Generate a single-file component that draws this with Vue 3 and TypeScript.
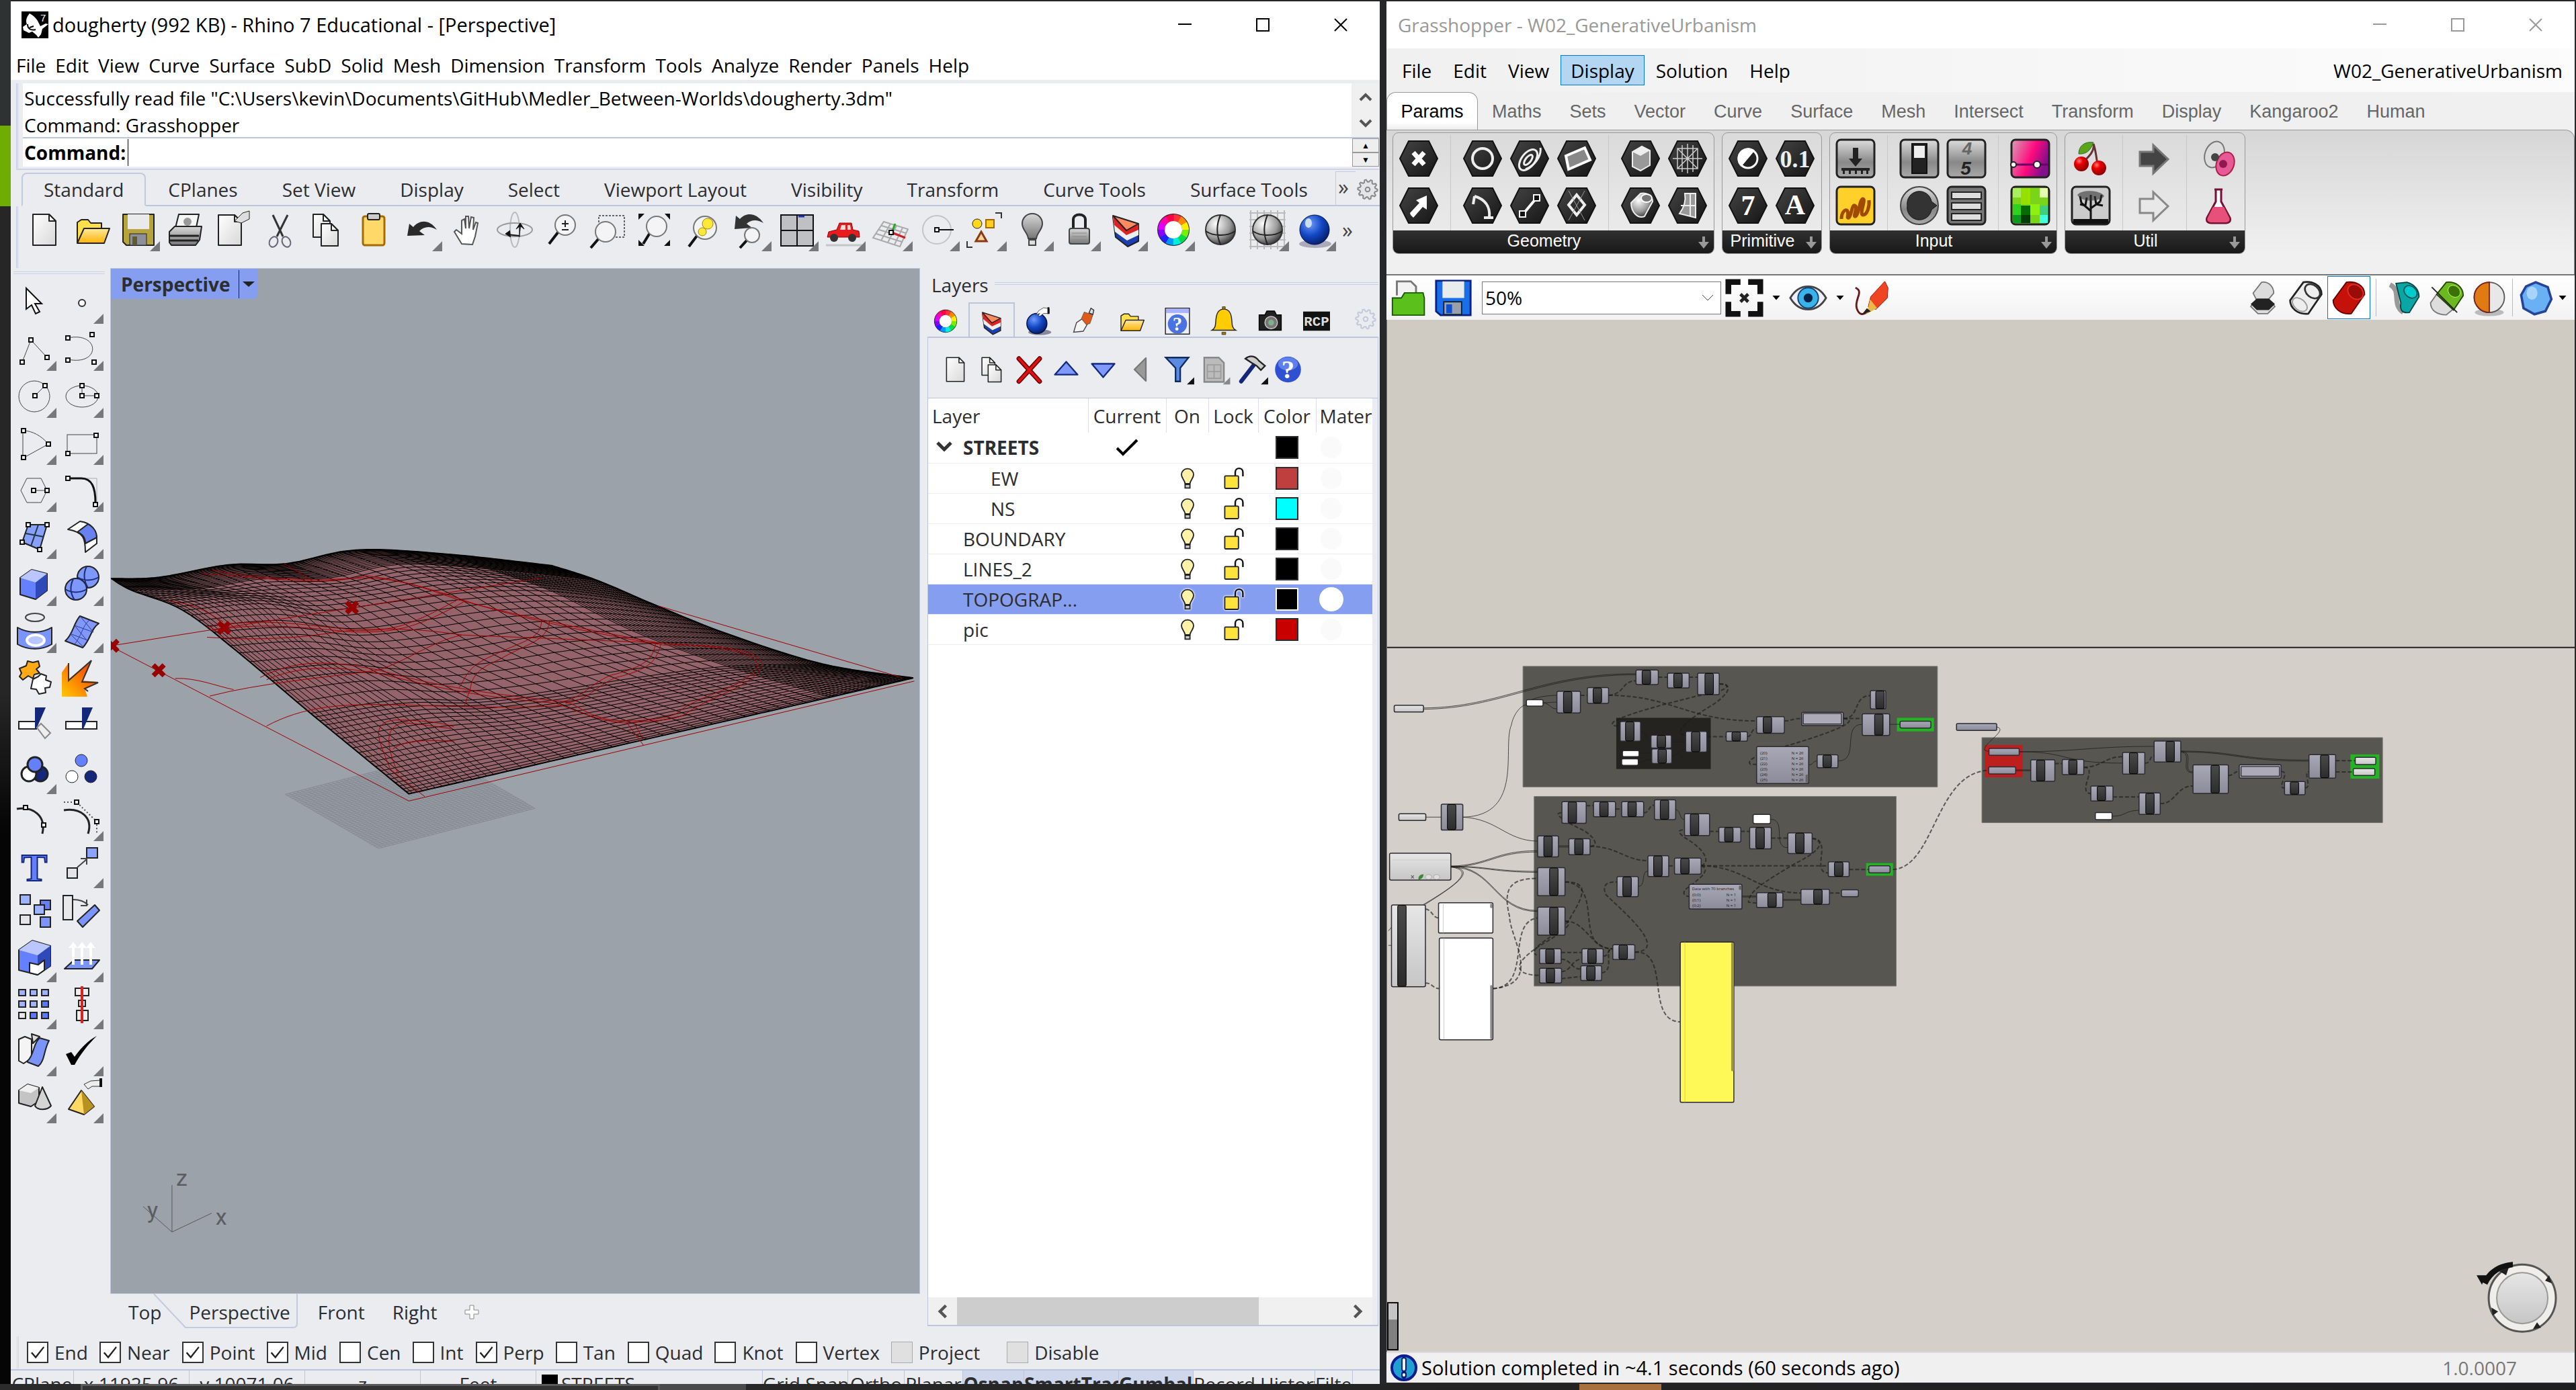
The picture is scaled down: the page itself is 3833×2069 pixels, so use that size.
<script setup lang="ts">
type Tool = { icon: string; more?: boolean; label: string }

const tri = 'stroke="#222" stroke-width="2" stroke-linejoin="round"'
const thin = 'fill="none" stroke="#444" stroke-width="1"'
const knob = (x: number, y: number): string =>
  `<rect x="${x - 3}" y="${y - 3}" width="6" height="6" fill="#fff" stroke="#111" stroke-width="2"/>`
const box = (x: number, y: number, w: number, h: number, fill: string, sw = 1): string =>
  `<rect x="${x}" y="${y}" width="${w}" height="${h}" fill="${fill}" stroke="#222" stroke-width="${sw}"/>`
const disc = (x: number, y: number, r: number, fill: string, sw = 1): string =>
  `<circle cx="${x}" cy="${y}" r="${r}" fill="${fill}" stroke="#222" stroke-width="${sw}"/>`
const lens = (x: number, y: number, r: number, hx: number, hy: number): string =>
  `<path d="M${x - r * 0.7} ${y + r * 0.7}L${hx} ${hy}" stroke="#111" stroke-width="4"/><circle cx="${x}" cy="${y}" r="${r}" fill="#f4f4f6" stroke="#777" stroke-width="2"/>`
const page = (x: number, y: number, w: number, h: number): string =>
  `<path d="M${x} ${y}h${w - 10}l10 10v${h - 10}h-${w}z" fill="url(#paper)" ${tri}/><path d="M${x + w - 10} ${y}v10h10z" fill="#fff" ${tri}/>`
const hue = ['#f33', '#f80', '#fe0', '#7e0', '#0d4', '#0ed', '#09f', '#22f', '#80f', '#d0f', '#f0a', '#f04']
const wheelArcs = hue
  .map((c, i) => {
    const a = ((i * 30 - 90) * Math.PI) / 180
    const b = (((i + 1) * 30 - 88) * Math.PI) / 180
    const p = (t: number) => `${(35 + 18 * Math.cos(t)).toFixed(1)} ${(35 + 18 * Math.sin(t)).toFixed(1)}`
    return `<path d="M${p(a)}A18 18 0 0 1 ${p(b)}" fill="none" stroke="${c}" stroke-width="10"/>`
  })
  .join('')
const gear = (c: string, dash = false): string => {
  let d = ''
  for (let i = 0; i < 40; i++) {
    const r = i % 4 < 2 ? 22 : 17
    const a = (i * 9 * Math.PI) / 180
    d += `${i ? 'L' : 'M'}${(35 + r * Math.cos(a)).toFixed(1)} ${(35 + r * Math.sin(a)).toFixed(1)}`
  }
  return `<path d="${d}z" fill="${dash ? 'none' : '#e4e5e8'}" stroke="${c}" stroke-width="3"/><circle cx="35" cy="35" r="5" fill="none" stroke="${c}" stroke-width="3"/>`
}
const layerWedge = `<path d="M15 16l4 30 18 14 16-8V27z" fill="#1c3fb0" ${tri}/><path d="M15 16l3 22 18 13 17-8V27z" fill="#eee"/><path d="M15 16l2 12 18 15 18-8V26z" fill="#d22"/><path d="M15 14l38 12-18 10z" fill="#ff8a60" ${tri}/>`
const hand = '<path d="M36 13l10-6 12 2v10H46l-8 6-3-2 3-4-8 3z" fill="#fff" stroke="#222" stroke-width="1"/><path d="M56 6v14" stroke="#111" stroke-width="4"/>'
const bulbPath = 'M35 11c-9 0-15 7-15 15 0 9 8 13 9 22h12c1-9 9-13 9-22 0-8-6-15-15-15z'

const icons: Record<string, string> = {
  page: page(18, 12, 34, 46),
  folder: `<path d="M14 55V24l6-4h10l4 5h16v10" fill="#ffe04a" ${tri}/><path d="M14 55l10-22h38L54 55z" fill="url(#gold)" ${tri}/>`,
  disk: `<path d="M12 12h46v46H17l-5-5z" fill="#b5a53c" ${tri}/><rect x="19" y="12" width="32" height="22" fill="#e8eaec"/><rect x="22" y="41" width="25" height="17" fill="#8d9098" stroke="#222"/><rect x="26" y="45" width="7" height="12" fill="#5f5a2c"/>`,
  printer: `<path d="M19 36l6-24h30l-5 24z" fill="#f6f6f6" ${tri}/><circle cx="38" cy="23" r="6" fill="#999"/><path d="M11 38l8-8h40l-3 20-6 8H14l-3-4z" fill="url(#steel)" ${tri}/><path d="M11 44h44M12 51h42" stroke="#222" stroke-width="3"/>`,
  props: `${page(14, 13, 34, 45)}<path d="M38 22l12-12 10-3v12l-12 6z" fill="#ddd" stroke="#222"/>`,
  cut: '<path d="M25 13l15 32M47 13L31 45" stroke="#333" stroke-width="3"/><ellipse cx="26" cy="53" rx="6" ry="8" fill="none" stroke="#667" stroke-width="2" transform="rotate(25 26 53)"/><ellipse cx="45" cy="53" rx="6" ry="8" fill="none" stroke="#667" stroke-width="2" transform="rotate(-25 45 53)"/>',
  copy: page(15, 12, 25, 34) + page(27, 26, 25, 33),
  paste: `<rect x="19" y="15" width="32" height="43" rx="3" fill="#ffd86a" stroke="#a36b00" stroke-width="3"/><rect x="26" y="11" width="18" height="9" rx="2" fill="#ccc" ${tri}/>`,
  undo: '<path d="M15 44L18 26l6 5c9-11 24-12 35 4-10-6-19-5-26 2l8 6z" fill="#2a2a2a"/>',
  pan: '<path d="M26 56L15 38l3-3 8 6V21l4-2 2 14V15h4l1 18 3-17 4 1-1 18 4-11 3 1-4 20-4 12z" fill="#fff" stroke="#555" stroke-width="2"/>',
  orbit: '<ellipse cx="35" cy="35" rx="7" ry="26" fill="none" stroke="#bbb" stroke-width="2"/><ellipse cx="35" cy="35" rx="26" ry="10" fill="none" stroke="#999" stroke-width="2"/><path d="M42 46V30l-5 4 6-9 6 9-5-4M28 36l-7 5 8 5" fill="#111" stroke="#111"/><path d="M24 42l18 2" stroke="#111" stroke-width="2"/>',
  zoom: lens(40, 28, 15, 16, 56) + '<path d="M35 26h10M40 21v10M35 35h10" stroke="#222" stroke-width="2"/>',
  zoomWin: '<rect x="20" y="14" width="38" height="32" fill="none" stroke="#666" stroke-width="2" stroke-dasharray="3 2"/>' + lens(30, 38, 15, 8, 62),
  zoomExt: lens(36, 30, 15, 16, 56) + '<path d="M9 20v-9h9zM56 11v9l-8-9zM9 50v9h9zM56 50v9h-9z" fill="#111"/>',
  zoomSel: lens(38, 32, 17, 14, 60) + '<circle cx="42" cy="26" r="8" fill="#ffe838" stroke="#a80"/><circle cx="34" cy="38" r="6" fill="#ffe838" stroke="#a80"/>',
  undoView: '<path d="M12 34L14 14l6 5c9-10 24-10 35 6-10-6-18-5-25 1l8 6z" fill="#333"/>' + lens(38, 43, 11, 20, 62),
  views: '<rect x="11" y="13" width="48" height="46" fill="#bfc0c4" stroke="#111" stroke-width="2"/><path d="M35 13v46M11 36h48" stroke="#111" stroke-width="2"/><path d="M37 15h9" stroke="#23a" stroke-width="3"/>',
  car: '<path d="M10 46l2-8 12-3 4-10h18l2 10 9 2 1 9z" fill="#e81c1c" stroke="#900"/><path d="M31 28h6v7h-8zM40 28h4l1 7h-5z" fill="#fcdada"/><circle cx="20" cy="47" r="6" fill="#333"/><circle cx="47" cy="47" r="6" fill="#333"/><path d="M8 58h54" stroke="#c5c6ca" stroke-width="3"/>',
  plane: '<g fill="none" stroke="#aaa" stroke-width="2"><path d="M24 23l36 11-12 26-40-13zM34 26l-14 25M43 29L30 54M52 32L40 57M21 29l36 11M17 35l37 11M13 41l38 12"/></g><path d="M36 39l5-13" stroke="#2a2" stroke-width="3"/><path d="M36 39l20 8" stroke="#c22" stroke-width="3"/>' + knob(35, 39),
  snap: '<circle cx="33" cy="35" r="21" fill="none" stroke="#c4c4c8" stroke-width="2"/><path d="M35 35h23" stroke="#111" stroke-width="2"/>' + knob(33, 35),
  shapes: `${disc(23, 26, 7, '#ffd81a')}<rect x="36" y="20" width="12" height="12" fill="#ffcf20" stroke="#a60" stroke-width="2"/><path d="M29 38l8 14H21z" fill="#ffd0a0" stroke="#8a3a10" stroke-width="3"/><path d="M50 10h9v8M8 52v9h8" fill="none" stroke="#333" stroke-width="2"/>`,
  bulbGrey: `<path d="${bulbPath}" fill="url(#steel)" stroke="#444" stroke-width="2"/><path d="M30 50h10v8H30z" fill="#ddd" stroke="#444" stroke-width="2"/>`,
  lock: '<path d="M26 34V20c0-10 18-10 18 0v14" fill="none" stroke="#222" stroke-width="4"/><rect x="20" y="33" width="30" height="23" rx="3" fill="url(#steel)" stroke="#444" stroke-width="2"/><path d="M24 40h22M24 45h22M24 50h22" stroke="#888"/>',
  layers: layerWedge,
  wheel: `<circle cx="35" cy="35" r="24" fill="#222"/>${wheelArcs}<circle cx="35" cy="35" r="13" fill="#fff"/>`,
  sphere: '<circle cx="35" cy="35" r="22" fill="url(#chrome)" stroke="#333" stroke-width="2"/><path d="M35 13c-6 14-6 30 0 44M13 37c12 8 32 8 44 0" fill="none" stroke="#222" stroke-width="2"/>',
  sphereGrid: '<path d="M8 10h54M8 20h54M8 30h54M8 40h54M8 50h54M8 60h54M10 6v58M20 6v58M30 6v58M40 6v58M50 6v58M60 6v58" stroke="#bbb" stroke-width="2"/><circle cx="35" cy="35" r="22" fill="url(#chrome)" stroke="#333" stroke-width="2"/><path d="M35 13c-6 14-6 30 0 44M13 37c12 8 32 8 44 0" fill="none" stroke="#222" stroke-width="2"/>',
  ball: '<ellipse cx="36" cy="56" rx="24" ry="6" fill="#aab"/><circle cx="35" cy="35" r="22" fill="url(#blueBall)" stroke="#014" stroke-width="1"/><ellipse cx="26" cy="25" rx="5" ry="7" fill="#cde"/>',
  gear: gear('#888'),
  gearPale: gear('#c3c9da', true),

  cursor: '<path d="M22 14v31l8-6 6 13 6-3-7-12h10z" fill="#fff" stroke="#111" stroke-width="2"/>',
  point: '<circle cx="35" cy="36" r="5" fill="#fff" stroke="#333" stroke-width="2"/>',
  polyline: `<path d="M16 54L29 21l24 26" ${thin}/>${knob(16, 54)}${knob(29, 21)}${knob(53, 47)}`,
  curve: `<path d="M14 18C62 8 64 60 14 50" ${thin}/>${knob(14, 18)}${knob(50, 13)}${knob(14, 51)}${knob(53, 54)}`,
  circle: `<circle cx="34" cy="35" r="23" ${thin}/><path d="M35 34l15-15" ${thin}/>${knob(50, 19)}${knob(35, 34)}`,
  ellipse: `<ellipse cx="35" cy="35" rx="24" ry="16" ${thin}/><path d="M35 19v15h22" ${thin}/>${knob(35, 19)}${knob(35, 34)}${knob(57, 34)}`,
  arc: `<path d="M17 57V16c14 0 28 8 38 20z" ${thin}/>${knob(18, 16)}${knob(18, 56)}${knob(55, 36)}`,
  rect: `<rect x="13" y="22" width="44" height="28" ${thin}/>${knob(56, 23)}${knob(14, 50)}`,
  hexagon: `<path d="M14 35l9-18h21l9 18-9 18H23z" ${thin}/><path d="M33 35h20" ${thin}/>${knob(33, 35)}${knob(53, 35)}`,
  fillet: `<path d="M36 17h21v38" fill="none" stroke="#aaa"/><path d="M14 17h20c16 0 21 14 21 36" fill="none" stroke="#111" stroke-width="3"/>${knob(14, 17)}${knob(55, 56)}`,
  patch: `<path d="M25 16h28L42 53 16 42z" fill="#86a0fb" ${tri}/><path d="M40 16L29 48M21 29l27 5" stroke="#234" stroke-width="2"/>${knob(25, 16)}${knob(53, 16)}${knob(16, 42)}${knob(42, 53)}`,
  bendSrf: `<path d="M14 23l18-12c16 2 26 12 25 33L40 57c0-20-2-30-26-34z" fill="#fff" ${tri}/><path d="M28 27l16-12c10 6 13 12 13 20L40 44c0-8-4-14-12-17z" fill="#6782f0" ${tri}/>`,
  cube: `<path d="M13 25l17-12 23 6v25L36 57l-23-7z" fill="#6580ff" ${tri}/><path d="M13 25l17-12 23 6-17 13z" fill="#b9c6ff"/><path d="M36 32l17-13v25L36 57z" fill="#2f49b8"/>`,
  spheres: `${disc(44, 24, 16, '#7d97fb', 2)}${disc(26, 42, 16, '#7d97fb', 2)}<path d="M42 8c-6 12-4 22 2 32M28 24c10 6 22 6 32 0M22 27c-6 12-4 22 2 31M10 42c10 6 22 6 32 0" fill="none" stroke="#1b2c7a" stroke-width="2"/>`,
  pipe: `<ellipse cx="35" cy="14" rx="14" ry="6" fill="none" stroke="#444" stroke-width="2"/><path d="M9 29c16 9 36 9 51 0v25c-15 9-35 9-51 0z" fill="#7b94fb" ${tri}/><ellipse cx="36" cy="48" rx="13" ry="8" fill="#b9c6ff" stroke="#fff" stroke-width="4"/>`,
  mesh: `<path d="M32 12l28 11c-12 8-12 24-24 36L10 49c12-10 12-26 22-37z" fill="#8198fa" ${tri}/><path d="M46 18c-10 8-12 24-22 36M24 26l28 10M17 38l26 10M32 12l20 24M24 26l18 22M17 38l20 20" stroke="#2a3f90" fill="none" stroke-width="1"/>`,
  puzzle: `<path d="M12 20l10-4 2-7 8 2 8-2 2 8-5 4 5 6-8 2-2 6-7-4-8 6-5-5 3-5z" fill="#ffa915" ${tri}/><path d="M32 36l8-4 4-4 8 3-1 6 8 3-2 8-7 1 1 7-10 2-4-7-8-1z" fill="#fff" ${tri}/>`,
  burst: '<path d="M5 62V26l10-14v24l34-28-14 30 24 2-20 10 4 12z" fill="url(#flame)"/><path d="M15 12v26L49 8 35 40l24 1-20 9 5 4" fill="none" stroke="#333" stroke-width="2"/>',
  trim: `${box(11, 29, 26, 11, '#fff', 2)}<path d="M35 8h16L37 40h-2z" fill="#14277a"/><path d="M38 38l6-6 14 14-8 8z" fill="#eee" stroke="#888" stroke-width="2"/>`,
  split: `${box(11, 29, 46, 11, '#fff', 2)}<path d="M35 8h16L37 40h-2z" fill="#14277a"/>`,
  group: `${disc(43, 37, 11, '#14277a', 3)}${disc(26, 37, 11, '#fff', 3)}${disc(35, 23, 11, '#6580ff', 3)}`,
  ungroup: `${disc(34, 17, 9, '#6580ff')}${disc(20, 41, 9, '#fff')}${disc(48, 41, 9, '#14277a')}`,
  editPts: `<path d="M8 19c24-4 44 10 38 37" fill="none" stroke="#222" stroke-width="3"/>${knob(21, 17)}${knob(48, 43)}`,
  ctrlPts: `<path d="M8 21c24-4 44 10 36 35" fill="none" stroke="#222" stroke-width="3"/><path d="M8 9h19l30 29v18" fill="none" stroke="#555" stroke-dasharray="2 3" stroke-width="2"/>${knob(27, 9)}${knob(57, 38)}`,
  text: '<text x="34" y="56" text-anchor="middle" font-family="Liberation Serif, serif" font-weight="bold" font-size="58" fill="#6580ff" stroke="#14277a" stroke-width="2">T</text>',
  move: `${box(42, 7, 16, 15, '#8ba3fc', 2)}${box(13, 37, 15, 15, '#e4e4e8', 2)}<path d="M28 36l14-12m-9-1h9v9" fill="none" stroke="#444" stroke-width="2"/>`,
  copyObj: `${box(13, 7, 15, 14, '#9fb2ff', 2)}${box(43, 15, 15, 14, '#6580ff', 2)}${box(34, 22, 15, 14, '#9fb2ff', 2)}${box(13, 37, 15, 14, '#e4e4e8', 2)}${box(43, 40, 15, 15, '#7b94ff', 2)}`,
  rotate: `${box(7, 8, 14, 36, '#e8e8ea', 2)}<path d="M22 14c10 0 18 4 22 8m-2-8v9h-9" fill="none" stroke="#444" stroke-width="2"/><path d="M28 46l26-24 7 8-25 25z" fill="#7b94fb" ${tri}/>`,
  solid: `<path d="M11 19L31 5l27 8v30L39 56 11 49z" fill="#6580ff" ${tri}/><path d="M11 19L31 5l27 8-19 14z" fill="#b9c6ff"/><path d="M39 27l19-14v30L39 56z" fill="#2f49b8"/><path d="M27 38l13 3 9-7v15l-10 7-12-3z" fill="#fff" ${tri}/>`,
  extrude: `<path d="M9 47l14-13h38L50 47z" fill="#7b94fb" ${tri}/><path d="M20 41V16h-5l7-9 7 9h-5v25zM33 41V16h-5l7-9 7 9h-5v25zM46 41V16h-5l7-9 7 9h-5v25z" fill="#fff"/>`,
  array: [8, 25, 42].map((y, r) => [11, 28, 45].map((x, c) => box(x, y, 10, 9, r === 2 && c === 0 ? '#e8e8ea' : r + c > 2 ? '#5a78ff' : '#9fb2ff', 2)).join('')).join(''),
  align: `${box(25, 6, 20, 11, '#eee', 2)}${box(30, 24, 10, 9, '#eee', 2)}${box(27, 39, 17, 15, '#eee', 2)}<path d="M35 3v55" stroke="#d22" stroke-width="4"/>`,
  bend: `<path d="M11 12l9-4 10 4v28l-12 8-7-4z" fill="#f4f4f4" ${tri}/><path d="M30 4l12 4-10 10z" fill="#ddd" ${tri}/><path d="M24 44c10-8 8-26 18-34l14 4c-8 14-6 30-16 38l-16-6z" fill="#7b94fb" ${tri}/>`,
  check: '<path d="M11 34l8-3 5 7C34 24 44 14 57 7 44 20 34 32 24 50h-5z" fill="#000"/>',
  prims: `<path d="M11 18l13-9 17 5v20l-12 8-18-5z" fill="#c4c4c4" ${tri}/><path d="M11 18l13-9 17 5-12 8z" fill="#f0f0f0"/><path d="M46 13l13 28c-6 7-20 7-24 0z" fill="#d4d4d4" ${tri}/>`,
  pyramid: `<path d="M34 18l19 24-15 12-23-8z" fill="#ffd964" ${tri}/><path d="M34 18l19 24-15 12z" fill="#b8921f"/><path d="M38 9l10-5 14-1v9H50l-6 4z" fill="#eee" stroke="#333"/><path d="M63 0v13" stroke="#111" stroke-width="4"/>`,

  ballHand: '<ellipse cx="38" cy="58" rx="24" ry="6" fill="#889"/><circle cx="32" cy="40" r="21" fill="url(#blueBall)" stroke="#014" stroke-width="2"/>' + hand,
  tube: '<path d="M12 58l6-20 12-8 10 12-8 14z" fill="#f4f4f4" stroke="#444" stroke-width="2"/><path d="M28 30l6-14 18 6-6 18-8 2z" fill="#e05a1a" stroke="#444"/><path d="M44 18l4-10 6 4-2 9z" fill="#ddd" stroke="#333" stroke-width="2"/>',
  helpWin: `${box(10, 8, 50, 54, '#eef0ff', 2)}<rect x="11" y="9" width="48" height="9" fill="#aab2ff"/><circle cx="35" cy="41" r="20" fill="#4a72e0"/><text x="35" y="55" text-anchor="middle" font-family="Liberation Serif, serif" font-weight="bold" font-size="40" fill="#fff">?</text>`,
  bell: '<path d="M10 54c10-6 7-14 9-26 2-14 9-18 16-18s14 4 16 18c2 12-1 20 9 26z" fill="#fc0" stroke="#222" stroke-width="2"/><path d="M31 58h8v5h-8zM32 5h6v5h-6z" fill="#a70" stroke="#222"/>',
  camera: '<path d="M12 22h12l4-8h16l4 8h10v32H12z" fill="#222" stroke="#000" stroke-width="2"/><circle cx="37" cy="38" r="13" fill="#777" stroke="#ccc" stroke-width="2"/><circle cx="37" cy="38" r="6" fill="#7fb08a"/>',
  rcp: '<rect x="7" y="15" width="56" height="40" fill="#111"/><text x="35" y="45" text-anchor="middle" font-family="Liberation Mono, monospace" font-weight="bold" font-size="29" fill="#ddd">RCP</text>',
  del: '<path d="M15 14l40 44M55 14L15 58" stroke="#600" stroke-width="9" stroke-linecap="round"/><path d="M15 14l40 44M55 14L15 58" stroke="#e01010" stroke-width="5" stroke-linecap="round"/>',
  up: `<path d="M35 20l22 25H13z" fill="#8099ff" stroke="#112a80" stroke-width="3" stroke-linejoin="round"/>`,
  down: `<path d="M35 50L13 24h44z" fill="#8099ff" stroke="#112a80" stroke-width="3" stroke-linejoin="round"/>`,
  left: '<path d="M24 35l22-22v44z" fill="#999" stroke="#777" stroke-width="3" stroke-linejoin="round"/>',
  funnel: '<path d="M13 12h44L41 32v26h-9V32z" fill="#5b8be0" stroke="#112a60" stroke-width="3"/><path d="M68 50v14H54z" fill="#111"/>',
  grid: '<path d="M16 12h28l10 10v37H16z" fill="#bbb" stroke="#888" stroke-width="3"/><path d="M22 26h26v26H22zM35 26v26M22 39h26" fill="none" stroke="#999" stroke-width="2"/><path d="M66 50v14H52z" fill="#888"/>',
  hammer: '<path d="M16 58L42 24" stroke="#14277a" stroke-width="8" stroke-linecap="round"/><path d="M24 14c10-8 20-4 26 4l12 10-8 8-8-8-10-6z" fill="#ccc" stroke="#222" stroke-width="3"/><path d="M68 50v14H54z" fill="#111"/>',
  help: '<circle cx="35" cy="35" r="25" fill="#2f50d0"/><ellipse cx="35" cy="24" rx="19" ry="13" fill="#5f80ea"/><text x="35" y="52" text-anchor="middle" font-family="Liberation Serif, serif" font-weight="bold" font-size="50" fill="#fff">?</text>',
  bulb: `<path d="${bulbPath}" fill="#fff2a8" stroke="#222" stroke-width="3"/><path d="M29 50h12v9H29z" fill="#ccc" stroke="#222" stroke-width="3"/>`,
  unlock: '<path d="M40 32V20c0-13 19-13 19 0v10" fill="none" stroke="#111" stroke-width="4"/><rect x="14" y="29" width="34" height="31" rx="2" fill="#ffe23c" stroke="#222" stroke-width="3"/>',
}

const hexPath = 'M2 30L15 4h30l13 26-13 26H15z'
const hex = (inner: string): string => `<path d="${hexPath}" fill="url(#coal)" stroke="#111" stroke-width="2"/>${inner}`
const tile = (fill: string, inner: string): string =>
  `<rect x="2" y="2" width="56" height="56" rx="6" fill="${fill}" stroke="#222" stroke-width="3"/>${inner}`
const w2 = 'fill="none" stroke="#eee" stroke-width="3"'
const gh: Record<string, string> = {
  pt: hex('<path d="M22 21l16 18M38 21L22 39" stroke="#fff" stroke-width="7"/>'),
  vec: hex('<path d="M18 44l4 4 14-16 6 4V15L26 22l5 4-14 15z" fill="#fff"/>'),
  circ: hex('<circle cx="30" cy="30" r="15" fill="none" stroke="#eee" stroke-width="4"/>'),
  arcs: hex('<path d="M18 16c14 4 24 14 22 32M32 48h14M18 16l-2 12" fill="none" stroke="#eee" stroke-width="4"/>'),
  crv: hex(`<ellipse cx="28" cy="32" rx="10" ry="18" transform="rotate(38 28 32)" ${w2}/><ellipse cx="28" cy="32" rx="4" ry="9" transform="rotate(38 28 32)" ${w2}/><path d="M46 14c2 12-8 26-22 32" ${w2}/>`),
  line: hex(`<path d="M20 43l20-24" stroke="#fff" stroke-width="4"/><rect x="15" y="38" width="9" height="9" fill="#111" stroke="#fff" stroke-width="2"/><rect x="36" y="14" width="9" height="9" fill="#111" stroke="#fff" stroke-width="2"/>`),
  pl: hex(`<path d="M14 26l28-12 8 18-32 14z" fill="#888" stroke="#fff" stroke-width="4"/>`),
  rec: hex('<path d="M30 14l12 15-12 15-12-15z" fill="none" stroke="#eee" stroke-width="4"/><path d="M18 8l24 44M42 8L18 52" stroke="#999"/>'),
  bx: hex('<path d="M18 20l14-8 12 6v22l-14 8-12-6z" fill="#999" stroke="#eee" stroke-width="2"/><path d="M18 20l14-8 12 6-14 8z" fill="#eee"/>'),
  msh: hex('<path d="M15 15h30v30H15zM15 15l30 30M45 15L15 45M30 8v44M8 30h44M22 10v40M38 10v40" fill="none" stroke="#ccc" stroke-width="1.5"/>'),
  brep: hex('<path d="M16 26l14-14c10-2 18 4 18 12L36 46c-10 4-20-6-20-20z" fill="url(#chrome)" stroke="#eee" stroke-width="2"/><ellipse cx="39" cy="19" rx="8" ry="6" fill="#777" stroke="#fff" stroke-width="2"/>'),
  srf: hex('<path d="M26 12h16v36l-24-6c6-8 10-18 8-30zM34 12v34M20 30h22" fill="#999" stroke="#eee" stroke-width="2"/>'),
  bool: hex('<circle cx="30" cy="30" r="14" fill="#222" stroke="#fff" stroke-width="3"/><path d="M40 18A15 15 0 0 0 20 42z" fill="#fff"/>'),
  num: hex('<text x="30" y="43" text-anchor="middle" font-family="Liberation Serif, serif" font-weight="bold" font-size="36" fill="#eee">0.1</text>'),
  int: hex('<text x="30" y="44" text-anchor="middle" font-family="Liberation Serif, serif" font-weight="bold" font-size="42" fill="#fff">7</text>'),
  str: hex('<text x="30" y="43" text-anchor="middle" font-family="Liberation Serif, serif" font-weight="bold" font-size="42" fill="#fff">A</text>'),
  slider: tile('url(#steel2)', '<path d="M26 14h8v16h6L30 42 20 30h6zM9 44h42v4H9zM11 48h3v5h-3zM20 48h3v5h-3zM29 48h3v5h-3zM38 48h3v5h-3zM46 48h3v5h-3z" fill="#222"/>'),
  sketch: tile('#ffcf2a', '<path d="M9 50c0-10 6-16 9-12 2 4-2 12 2 10s4-20 9-18-4 18 1 16 6-26 11-26-6 24 0 24 10-12 9-22" fill="none" stroke="#a04a00" stroke-width="5"/>'),
  toggle: tile('url(#steel2)', '<rect x="19" y="8" width="22" height="44" fill="#222" stroke="#111" stroke-width="2"/><rect x="22" y="11" width="16" height="18" fill="#eee"/>'),
  dial: '<circle cx="30" cy="30" r="28" fill="url(#steel2)" stroke="#444" stroke-width="2"/><path d="M12 30a18 18 0 0 1 36-6l8 6-8 6a18 18 0 0 1-36-6z" fill="#333" stroke="#111"/>',
  digits: tile('url(#steel2)', '<text x="31" y="24" text-anchor="middle" font-family="Liberation Sans, sans-serif" font-weight="bold" font-style="italic" font-size="26" fill="#666">4</text><text x="29" y="54" text-anchor="middle" font-family="Liberation Sans, sans-serif" font-weight="bold" font-style="italic" font-size="28" fill="#222">5</text>'),
  list: tile('#777', '<path d="M8 10h44v10H8zM8 26h44v10H8zM8 42h44v10H8z" fill="#ddd" stroke="#222" stroke-width="2"/>'),
  grad: tile('url(#pink)', '<path d="M3 39h54" stroke="#606" stroke-width="3"/><circle cx="5" cy="39" r="4" fill="#fff" stroke="#222" stroke-width="2"/><circle cx="40" cy="39" r="5" fill="#fff" stroke="#222" stroke-width="2"/>'),
  image: tile('#7ad41a', '<path d="M4 4h12v14H4z" fill="#a8ee60"/><path d="M16 4h14v24H16z" fill="#96e000"/><path d="M44 4h12v14H44z" fill="#e4ffb0"/><path d="M16 30h14v14H16z" fill="#076c00"/><path d="M30 28h14v16H30z" fill="#8cf010"/><path d="M4 28h12v16H4z" fill="#30d020"/><path d="M16 44h14v12H16z" fill="#053c05"/><path d="M44 30h12v14H44z" fill="#3ed080"/><path d="M44 44h12v12H44z" fill="#4fd"/><path d="M4 44h12v12H4z" fill="#0a9a20"/>'),
  cherry: '<path d="M34 8c2 12-8 20-18 30M34 8c4 12 4 20 6 30" fill="none" stroke="#633" stroke-width="3"/><path d="M34 6C20 4 12 12 12 23c11 1 18-5 22-17z" fill="#5aa51a" stroke="#363"/><circle cx="16" cy="38" r="11" fill="url(#cherry)"/><circle cx="42" cy="44" r="11" fill="url(#cherry)"/>',
  tree: tile('#ccc', '<path d="M4 50h52v7H4z" fill="#111"/><path d="M30 52V34M30 38L16 26M30 34l14-10M30 34V14M22 30l-8-2M38 28l10 2M22 30l2-12M38 28l-2-12M16 26l-2-10M44 24l2-10" stroke="#111" stroke-width="3"/><path d="M10 14c6-8 34-8 40 2-6 8-34 10-40-2z" fill="#333" opacity=".6"/>'),
  arrowD: '<path d="M8 20h20V10l22 21-22 21V41H8z" fill="#444" stroke="#777" stroke-width="3"/>',
  arrowL: '<path d="M8 20h20V10l22 21-22 21V41H8z" fill="#e8e8e8" stroke="#888" stroke-width="3"/>',
  blob: '<ellipse cx="24" cy="24" rx="14" ry="20" transform="rotate(20 24 24)" fill="#ddd" stroke="#777" stroke-width="2"/><ellipse cx="40" cy="38" rx="13" ry="18" transform="rotate(20 40 38)" fill="#e85a96" stroke="#a24" stroke-width="2"/><circle cx="25" cy="28" r="6" fill="#444"/><circle cx="37" cy="38" r="6" fill="#901850"/>',
  flask: '<path d="M24 6h12M26 6v18L13 48c-2 6 2 8 8 8h18c6 0 10-2 8-8L34 24V6" fill="#fff" stroke="#713" stroke-width="3"/><path d="M22 32h16l8 16c2 5-2 7-6 7H20c-5 0-8-3-6-7z" fill="#e8507c"/>',

  open: '<path d="M10 26V4h22l8 8v20" fill="#f2f2f2" stroke="#777" stroke-width="3"/><path d="M3 57V30h14l5-8h29l2 8v27z" fill="#5cc01c" stroke="#175c00" stroke-width="2"/>',
  save: '<path d="M3 3h54v54H10l-7-6z" fill="#1a6ee8" stroke="#0a2080" stroke-width="3"/><rect x="13" y="4" width="34" height="26" fill="#e8ecec"/><rect x="15" y="36" width="28" height="20" fill="#9aa0aa" stroke="#123" stroke-width="2"/><rect x="19" y="40" width="9" height="14" fill="#0b50d0"/>',
  frame: '<path d="M5 24V5h19M36 5h19v19M55 36v19H36M24 55H5V36" fill="none" stroke="#111" stroke-width="9"/><path d="M24 24l12 12M36 24L24 36" stroke="#222" stroke-width="5"/>',
  eye: '<path d="M2 30C16 6 44 6 58 30 44 54 16 54 2 30z" fill="#eef" stroke="#444" stroke-width="3"/><circle cx="30" cy="30" r="16" fill="#39b4e8" stroke="#147" stroke-width="2"/><circle cx="30" cy="30" r="7" fill="#024"/>',
  pencil: '<path d="M4 14c14 6-2 18 2 32 4 12 10 12 22 2" fill="none" stroke="#6a1820" stroke-width="3"/><path d="M24 44l4-16L50 4l5 10-1 16-18 18z" fill="#e42" stroke="#a11"/><path d="M24 46l3-14 11 14-18 10z" fill="#e8b84a"/><path d="M22 46l6 5-14 5z" fill="#222"/>',
  shadeA: '<path d="M14 22L28 4c12-2 20 8 20 18L38 34H20z" fill="#ddd" stroke="#777" stroke-width="2"/><path d="M10 44l10-12h20l10 12-12 12H22z" fill="#ddd" stroke="#777" stroke-width="2"/><path d="M10 40l10-9h20l10 9-10 10H20z" fill="#222"/>',
  shadeB: '<path d="M4 34L26 4c14-2 30 4 30 20L34 56C16 58 4 46 4 34z" fill="#eee" stroke="#222" stroke-width="3"/><ellipse cx="41" cy="19" rx="14" ry="10" transform="rotate(40 41 19)" fill="none" stroke="#333" stroke-width="3"/><ellipse cx="20" cy="41" rx="14" ry="9" transform="rotate(40 20 41)" fill="none" stroke="#999" stroke-width="2"/>',
  shadeC: '<path d="M4 34L26 4c14-2 30 4 30 20L34 56C16 58 4 46 4 34z" fill="#c4110a" stroke="#600" stroke-width="2"/><ellipse cx="41" cy="20" rx="14" ry="11" transform="rotate(40 41 20)" fill="#9a0c08" stroke="#e03020" stroke-width="2"/>',
  teal: '<path d="M8 8c20 10 2 32 22 46" fill="none" stroke="#999" stroke-width="8"/><path d="M18 6l18-2c14 4 20 14 20 24L40 54c-12 2-16-4-14-16z" fill="#0aa5a5" stroke="#044" stroke-width="2"/><ellipse cx="42" cy="20" rx="12" ry="9" transform="rotate(40 42 20)" fill="#0cc" stroke="#055" stroke-width="2"/>',
  green: '<path d="M4 38l10-14 28 24-12 10C14 58 4 50 4 38z" fill="#ddd" stroke="#777" stroke-width="2"/><path d="M14 24L30 4c16-2 28 8 28 22L42 50z" fill="#6cb820" stroke="#240" stroke-width="2"/><ellipse cx="43" cy="19" rx="11" ry="9" transform="rotate(40 43 19)" fill="#3b7208" stroke="#bf5"/><path d="M6 12l42 42" stroke="#222" stroke-width="2"/>',
  halfBall: '<ellipse cx="30" cy="54" rx="24" ry="6" fill="#bbb"/><circle cx="30" cy="29" r="25" fill="#e8e8e8" stroke="#555" stroke-width="2"/><path d="M30 4a25 25 0 0 0 0 50z" fill="#e07a12" stroke="#722" stroke-width="2"/>',
  gem: '<path d="M30 4l20 8 6 20-10 20-18 5-18-10-4-22 8-14z" fill="#69b0f4" stroke="#26439a" stroke-width="4"/><ellipse cx="24" cy="22" rx="9" ry="11" fill="#a8d4fa"/>',
}

const rhinoMenu = ['File', 'Edit', 'View', 'Curve', 'Surface', 'SubD', 'Solid', 'Mesh', 'Dimension', 'Transform', 'Tools', 'Analyze', 'Render', 'Panels', 'Help']
const toolTabs = ['Standard', 'CPlanes', 'Set View', 'Display', 'Select', 'Viewport Layout', 'Visibility', 'Transform', 'Curve Tools', 'Surface Tools']
const t = (icon: string, more = false): Tool => ({ icon, more, label: icon })
const topTools: Tool[] = [
  t('page'), t('folder'), t('disk', true), t('printer'), t('props'), t('cut'), t('copy'), t('paste'), t('undo', true), t('pan'),
  t('orbit'), t('zoom'), t('zoomWin'), t('zoomExt'), t('zoomSel'), t('undoView', true), t('views', true), t('car', true), t('plane', true),
  t('snap', true), t('shapes', true), t('bulbGrey', true), t('lock', true), t('layers', true), t('wheel', true), t('sphere'), t('sphereGrid', true), t('ball', true),
]
const sideTools: Tool[] = [
  t('cursor'), t('point', true), t('polyline', true), t('curve', true), t('circle', true), t('ellipse', true), t('arc', true), t('rect', true),
  t('hexagon', true), t('fillet', true), t('patch', true), t('bendSrf', true), t('cube', true), t('spheres', true), t('pipe', true), t('mesh', true),
  t('puzzle'), t('burst'), t('trim'), t('split'), t('group', true), t('ungroup'), t('editPts'), t('ctrlPts', true), t('text'), t('move', true),
  t('copyObj'), t('rotate'), t('solid', true), t('extrude', true), t('array', true), t('align', true), t('bend', true), t('check', true), t('prims', true), t('pyramid', true),
]
const panelTabs = ['wheel', 'layers', 'ballHand', 'tube', 'folder', 'helpWin', 'bell', 'camera', 'rcp']
const layerTools = ['page', 'copy', 'del', 'up', 'down', 'left', 'funnel', 'grid', 'hammer', 'help']

type Layer = { name: string; color: string; depth: number; current?: boolean; selected?: boolean }
const layers: Layer[] = [
  { name: 'STREETS', color: '#000', depth: 0, current: true },
  { name: 'EW', color: '#bf3f3f', depth: 1 },
  { name: 'NS', color: '#0ff', depth: 1 },
  { name: 'BOUNDARY', color: '#000', depth: 0 },
  { name: 'LINES_2', color: '#000', depth: 0 },
  { name: 'TOPOGRAP...', color: '#000', depth: 0, selected: true },
  { name: 'pic', color: '#c80000', depth: 0 },
]
const snaps = [
  { n: 'End', on: true }, { n: 'Near', on: true }, { n: 'Point', on: true }, { n: 'Mid', on: true }, { n: 'Cen' }, { n: 'Int' },
  { n: 'Perp', on: true }, { n: 'Tan' }, { n: 'Quad' }, { n: 'Knot' }, { n: 'Vertex' }, { n: 'Project', off: true }, { n: 'Disable', off: true },
]

/* Terrain surface: a net of control points, subdivided unevenly into grid lines */
type P = [number, number]
const net: P[][] = [
  [[20, 248], [110, 242], [240, 186], [350, 181], [480, 120], [650, 138], [850, 190]],
  [[58, 300], [190, 292], [300, 250], [430, 245], [560, 185], [730, 205], [935, 256]],
  [[155, 390], [300, 360], [420, 390], [540, 355], [690, 310], [850, 305], [1040, 362]],
  [[260, 580], [400, 560], [540, 590], [680, 560], [830, 505], [1000, 480], [1180, 495]],
  [[395, 850], [560, 790], [700, 790], [850, 750], [1010, 690], [1180, 640], [1360, 630]],
  [[580, 1210], [740, 1123], [900, 1035], [1060, 948], [1215, 864], [1375, 777], [1530, 692]],
]
const rowSteps = [18, 8, 7, 6, 20]
const colSteps = [13, 6, 5, 5, 7, 24]
const spline = (pts: P[], steps: number[]): P[] => {
  const out: P[] = []
  for (let i = 0; i < pts.length - 1; i++) {
    const a = pts[Math.max(i - 1, 0)], b = pts[i], c = pts[i + 1], d = pts[Math.min(i + 2, pts.length - 1)]
    for (let s = 0; s < steps[i]; s++) {
      const k = s / steps[i]
      const f = (n: 0 | 1) => 0.5 * (2 * b[n] + (c[n] - a[n]) * k + (2 * a[n] - 5 * b[n] + 4 * c[n] - d[n]) * k * k + (3 * b[n] - a[n] - 3 * c[n] + d[n]) * k * k * k)
      out.push([f(0), f(1)])
    }
  }
  out.push(pts[pts.length - 1])
  return out
}
const wide = net.map((r) => spline(r, colSteps))
const cols: P[][] = wide[0].map((_, i) => spline(wide.map((r) => r[i]), rowSteps))
const rows: P[][] = cols[0].map((_, j) => cols.map((c) => c[j]))
const toD = (pts: P[]): string => 'M' + pts.map((p) => `${p[0].toFixed(1)} ${p[1].toFixed(1)}`).join('L')
const gridD = [...cols, ...rows].map(toD).join('')
const outline = toD([...rows[0], ...cols[cols.length - 1], ...[...rows[rows.length - 1]].reverse(), ...[...cols[0]].reverse()]) + 'z'
const floorLines: string = Array.from({ length: 41 }, (_, i) => {
  const k = i / 40
  return `M${347 + 176 * k} ${1212 + 242 * k}l295 -179M${347 + 295 * k} ${1212 - 179 * k}l176 242`
}).join('')
const streets = [
  'M1050 370L1508 690', 'M20 552L580 1242L1532 706', 'M20 548L200 480L480 376L830 245', 'M140 694C180 690 220 730 250 744', 'M205 773C300 715 420 690 515 660C560 640 620 530 680 500L840 515L1050 535',
  'M312 907C380 820 450 808 540 811C650 818 780 830 870 815', 'M300 690C380 590 460 630 520 655C620 720 700 755 860 795C900 800 900 850 960 880C1000 890 1060 880 1085 850C1120 770 1210 740 1235 650C1245 590 1200 555 1050 535C900 470 760 400 670 340C620 300 560 240 490 245C400 260 300 250 210 210',
  'M312 700C390 620 470 650 530 675C640 740 720 780 855 804C900 840 930 880 985 893C1040 885 1080 880 1100 855C1140 780 1230 730 1245 640C1250 580 1190 540 1060 545C920 490 780 420 690 350C630 300 570 255 500 235C420 280 330 250 190 225',
  'M200 465C300 420 380 455 450 470C540 500 580 460 670 345', 'M210 480C300 440 390 470 470 485C560 495 600 460 685 350', 'M200 510C300 525 370 515 450 485C520 465 600 470 680 500', 'M130 350C180 360 200 400 230 440', 'M345 180L400 260',
  'M830 430C830 520 800 520 740 590C690 640 690 680 675 735', 'M845 440C840 530 800 540 750 610C700 660 700 700 695 745L685 815', 'M1045 535C1040 600 1030 640 960 680C920 720 910 780 865 800', 'M1055 540C1045 610 1040 650 970 690C930 730 920 790 875 805',
  'M545 1100C530 1000 500 890 555 880C600 880 640 890 665 910', 'M560 1120C540 1010 530 910 570 892C610 900 630 910 660 918', 'M550 1010C570 970 610 968 665 975', 'M990 890L1022 993M1005 895L1022 970', 'M545 1100L610 1222',
]
const marks: P[] = [[22, 548], [109, 658], [232, 468], [473, 377]]

/* Grasshopper */
const ghMenu = ['File', 'Edit', 'View', 'Display', 'Solution', 'Help']
const ghTabs = ['Params', 'Maths', 'Sets', 'Vector', 'Curve', 'Surface', 'Mesh', 'Intersect', 'Transform', 'Display', 'Kangaroo2', 'Human']
const ribbon = [
  { name: 'Geometry', groups: [[['pt', 'vec']], [['circ', 'arcs'], ['crv', 'line'], ['pl', 'rec']], [['bx', 'brep'], ['msh', 'srf']]] },
  { name: 'Primitive', groups: [[['bool', 'int'], ['num', 'str']]] },
  { name: 'Input', groups: [[['slider', 'sketch']], [['toggle', 'dial'], ['digits', 'list']], [['grad', 'image']]] },
  { name: 'Util', groups: [[['cherry', 'tree']], [['arrowD', 'arrowL']], [['blob', 'flask']]] },
]

type Node = [number, number, number, number, number?]
const mainNodes: Node[] = [
  [668, 82, 58, 47, 684], [750, 92, 56, 48, 766], [828, 92, 56, 70, 847], [463, 151, 61, 70, 480], [542, 139, 55, 51, 557],
  [627, 249, 53, 64, 641], [707, 293, 53, 42, 723], [709, 338, 52, 47, 725], [797, 281, 55, 67, 812], [902, 282, 55, 31, 917],
  [981, 233, 72, 54, 998], [1276, 149, 40, 59, 1290], [1255, 224, 71, 70, 1287], [1353, 248, 80, 22], [981, 330, 135, 120], [1138, 357, 54, 42, 1153],
  [476, 509, 63, 70, 492], [558, 509, 57, 49, 574], [631, 509, 57, 49, 647], [716, 503, 55, 64, 731], [794, 548, 65, 71, 809],
  [883, 592, 57, 48, 898], [963, 592, 56, 70, 979], [1062, 610, 63, 67, 1082], [413, 620, 54, 68, 429], [494, 629, 55, 52, 509],
  [699, 684, 54, 68, 714], [768, 692, 69, 52, 784], [1167, 704, 54, 48, 1183], [1272, 717, 55, 23], [413, 723, 71, 91, 444],
  [413, 851, 71, 91, 444], [619, 752, 55, 65, 634], [806, 777, 137, 80], [981, 804, 68, 48, 1010], [1096, 793, 74, 49, 1129],
  [1201, 795, 44, 22], [418, 986, 56, 48, 434], [418, 1049, 57, 48, 435], [528, 986, 55, 48, 543], [525, 1041, 54, 48, 540],
  [608, 973, 57, 48, 624], [163, 517, 56, 84, 179],
]
const mainLight: Node[] = [[41, 196, 76, 22], [53, 548, 70, 22], [29, 676, 159, 87], [34, 844, 88, 265, 50]]
const mainWhite: Node[] = [[384, 178, 43, 21], [633, 343, 43, 20], [631, 370, 43, 21], [972, 550, 45, 30], [156, 837, 141, 98], [158, 951, 139, 330]]
const mainDash = [
  'M726 105H750', 'M806 105H828', 'M524 164H542', 'M597 164C640 160 630 117 668 117', 'M597 164C760 164 800 247 981 247',
  'M884 127C930 127 890 158 830 165C750 190 640 225 610 250C600 262 615 265 627 262', 'M884 127C930 127 900 170 860 200C800 245 760 292 797 293',
  'M852 298H902', 'M957 298C970 298 965 272 981 272', 'M1053 247C1075 247 1070 239 1098 239', 'M1206 239H1255', 'M1206 239C1250 239 1230 165 1276 165',
  'M1206 239C1260 245 1160 290 1080 320C1000 350 950 370 965 388H981', 'M539 522H558', 'M615 533H631', 'M688 545C705 545 700 520 716 520',
  'M859 605H883', 'M940 605H963', 'M1019 627H1062', 'M549 654C580 650 550 610 520 595C480 570 450 545 476 545', 'M549 654C620 654 640 700 699 700',
  'M753 717H768', 'M837 717H1167', 'M837 717C870 700 830 650 800 630C770 605 780 600 794 600', 'M837 717C870 730 820 770 800 790C785 805 795 816 806 816',
  'M837 717C950 717 980 805 1096 805', 'M1125 628C1180 630 1120 740 1167 740', 'M1125 628C1170 640 1130 680 1080 710C1000 770 960 800 960 835L981 838',
  'M1170 805H1201', 'M1221 729H1272', 'M484 769C540 769 540 800 500 880C480 940 380 980 410 1007',
  'M484 769C590 780 500 985 608 986', 'M484 896C540 896 550 985 608 986', 'M484 896C510 900 480 930 440 960C330 1040 360 1072 418 1072', 'M474 998H528',
  'M474 1020C500 1020 500 1052 525 1052', 'M475 1060C500 1060 500 1020 528 1020', 'M475 1083L525 1076', 'M583 1010C600 1010 590 988 608 988', 'M579 1064C610 1060 590 1000 600 988',
  'M665 997C760 990 620 850 590 810C580 780 590 769 619 769', 'M665 997C760 990 690 1220 783 1223', 'M297 1115C400 1110 330 900 413 886',
  'M297 1115C430 1100 340 950 340 880C320 780 350 758 413 758', 'M122 857C140 860 140 885 156 886', 'M122 1097C140 1097 140 1115 158 1115',
]
const mainWires = [
  'M117 205C320 203 420 93 668 94', 'M117 209C320 207 420 98 668 97', 'M427 188C445 188 445 186 463 186', 'M384 188C400 170 440 164 463 164', 'M427 188C445 190 445 208 463 208',
  'M219 559C380 555 320 330 345 260C350 225 370 195 384 195', 'M219 559C310 565 330 635 413 637', 'M123 559H163',
  'M188 718C290 714 300 668 413 668', 'M188 721C290 717 300 672 413 672', 'M188 718C280 718 300 735 413 735', 'M188 720C280 720 300 738 413 738',
  'M188 718C300 718 300 862 413 862', 'M188 721C300 721 300 866 413 865', 'M188 719C260 730 200 780 120 843', 'M188 721C255 732 195 785 116 843', 'M467 652H494', 'M467 656H494',
  'M1116 390C1130 388 1125 377 1138 377', 'M1192 377C1250 377 1200 258 1255 258', 'M1326 258H1353', 'M680 282C700 282 690 315 707 315', 'M676 353L707 350',
  'M674 381C690 381 690 372 709 372', 'M760 315H797', 'M761 361C780 361 780 338 797 338', 'M771 535C785 535 780 567 794 567', 'M1017 566C1060 566 1020 658 1062 658',
  'M943 815H981', 'M943 818H981', 'M1049 826H1096', 'M1049 829H1096', 'M674 784C695 784 680 734 699 734', 'M26 975H34', 'M26 928L34 916',
]
const sideNodes: Node[] = [
  [127, 232, 125, 31], [228, 343, 94, 31], [227, 426, 84, 31], [358, 394, 75, 96, 376], [456, 393, 67, 67, 476], [644, 361, 69, 97, 665],
  [742, 310, 83, 94, 779], [545, 511, 69, 67, 565], [695, 542, 66, 96, 716], [863, 417, 110, 127, 919], [1148, 491, 64, 59, 1166], [1224, 371, 83, 105, 1260],
]
const sideWires = [
  'M252 247C290 260 210 320 214 350L228 358', 'M322 358C500 358 550 334 742 334', 'M322 358C480 358 450 409 644 409', 'M825 355C1000 355 1000 395 1224 395', 'M825 359C1000 359 1000 400 1224 400',
  'M825 355C872 358 825 450 863 448', 'M825 359C865 362 818 452 863 452', 'M311 439H358', 'M311 443H358', 'M612 646C655 646 650 620 695 620',
]
const sideDash = [
  'M-71 884C60 874 60 451 227 441', 'M433 411H456', 'M523 428C580 425 590 380 644 380', 'M523 428C570 425 500 540 545 545', 'M614 560H695', 'M713 409C735 409 725 377 742 377',
  'M761 590C810 590 810 511 863 511', 'M973 464C990 464 990 446 1007 446', 'M1137 446C1170 446 1120 520 1148 520', 'M1212 520C1235 520 1205 448 1224 448', 'M1307 398H1368', 'M1307 448H1362',
]
const branchRows = ['{20}', '{21}', '{22}', '{23}', '{24}', '{25}']
const dataRows = ['{0;0}', '{0;1}', '{0;2}']
</script>

<template>
  <div class="desktop">
    <svg class="defs" aria-hidden="true">
      <defs>
        <linearGradient id="paper" x1="0" y1="0" x2="1" y2="1"><stop offset="0" stop-color="#fff" /><stop offset="1" stop-color="#d8d8d8" /></linearGradient>
        <linearGradient id="gold" x1="0" y1="0" x2="0" y2="1"><stop offset="0" stop-color="#ffe9a0" /><stop offset="1" stop-color="#ffb300" /></linearGradient>
        <linearGradient id="steel" x1="0" y1="0" x2="0" y2="1"><stop offset="0" stop-color="#d8d8d8" /><stop offset="1" stop-color="#777" /></linearGradient>
        <linearGradient id="steel2" x1="0" y1="0" x2="0" y2="1"><stop offset="0" stop-color="#ddd" /><stop offset=".6" stop-color="#888" /><stop offset="1" stop-color="#aaa" /></linearGradient>
        <linearGradient id="coal" x1="0" y1="0" x2="1" y2="1"><stop offset="0" stop-color="#444" /><stop offset="1" stop-color="#151515" /></linearGradient>
        <linearGradient id="pink" x1="0" y1="0" x2="1" y2=".4"><stop offset="0" stop-color="#d8a0b8" /><stop offset=".6" stop-color="#ff0a7c" /><stop offset="1" stop-color="#80108c" /></linearGradient>
        <linearGradient id="flame" x1="0" y1="1" x2="1" y2="0"><stop offset="0" stop-color="#ffc800" /><stop offset="1" stop-color="#f82800" /></linearGradient>
        <linearGradient id="nodeFill" x1="0" y1="0" x2="0" y2="1"><stop offset="0" stop-color="#a9a8b6" /><stop offset="1" stop-color="#8c8b99" /></linearGradient>
        <linearGradient id="lightFill" x1="0" y1="0" x2="0" y2="1"><stop offset="0" stop-color="#e6e6e6" /><stop offset="1" stop-color="#c6c6c6" /></linearGradient>
        <linearGradient id="barFill" x1="0" y1="0" x2="0" y2="1"><stop offset="0" stop-color="#4a4a4a" /><stop offset="1" stop-color="#2c2c2c" /></linearGradient>
        <radialGradient id="chrome" cx=".35" cy=".3" r=".8"><stop offset="0" stop-color="#fff" /><stop offset=".6" stop-color="#999" /><stop offset="1" stop-color="#222" /></radialGradient>
        <radialGradient id="blueBall" cx=".35" cy=".3" r=".8"><stop offset="0" stop-color="#6f9cff" /><stop offset=".5" stop-color="#1347c4" /><stop offset="1" stop-color="#03165a" /></radialGradient>
        <radialGradient id="cherry" cx=".35" cy=".3" r=".8"><stop offset="0" stop-color="#ff8080" /><stop offset=".3" stop-color="#e00" /><stop offset="1" stop-color="#700" /></radialGradient>
      </defs>
    </svg>
    <div class="edge"></div>

    <section class="rhino">
      <header class="title">
        <svg class="logo" viewBox="0 0 40 40"><rect width="40" height="40" fill="#000" /><path d="M12 3C7 9 6 14 8 19l-6 4 1 5 8 4 5-2 6 5 3 4 4-5 2-8 9-7-4-1-8 4-4-8c-2-4-8-9-12-11z" fill="#fff" /><path d="M9 19c0 6 4 10 12 8M12 24l6-2" stroke="#000" stroke-width="2" fill="none" /><text x="28" y="15" font-family="Liberation Sans, sans-serif" font-size="15" fill="#fff">7</text></svg>
        <span>dougherty (992 KB) - Rhino 7 Educational - [Perspective]</span>
        <div class="winbtns dark">
          <button aria-label="Minimize"><svg viewBox="0 0 20 20"><path d="M0 9h20" stroke-width="2" /></svg></button>
          <button aria-label="Maximize"><svg viewBox="0 0 20 20"><path d="M1 1h18v18H1z" stroke-width="2" /></svg></button>
          <button aria-label="Close"><svg viewBox="0 0 20 20"><path d="M1 1l18 18M19 1L1 19" stroke-width="2" /></svg></button>
        </div>
      </header>
      <nav class="menu"><button v-for="m in rhinoMenu" :key="m">{{ m }}</button></nav>

      <div class="command">
        <div class="history">
          <div class="lines">
            <p>Successfully read file "C:\Users\kevin\Documents\GitHub\Medler_Between-Worlds\dougherty.3dm"</p>
            <p>Command: Grasshopper</p>
          </div>
          <div class="vscroll">
            <svg viewBox="0 0 20 16"><path d="M2 13l8-8 8 8" /></svg>
            <svg viewBox="0 0 20 16"><path d="M2 3l8 8 8-8" /></svg>
          </div>
        </div>
        <div class="prompt">
          <label for="cmd">Command:</label><span class="caret"></span><input id="cmd" type="text" />
          <div class="spin"><button aria-label="Previous">▲</button><button aria-label="Next">▼</button></div>
        </div>
      </div>

      <div class="tooltabs">
        <button v-for="(m, i) in toolTabs" :key="m" :class="{ on: i === 0 }">{{ m }}</button>
        <span class="more">»</span>
        <svg class="cog" viewBox="8 8 54 54" v-html="icons.gear"></svg>
      </div>
      <div class="toolbar">
        <button v-for="b in topTools" :key="b.icon" :aria-label="b.label" :class="{ fly: b.more }"><svg viewBox="0 0 70 70" v-html="icons[b.icon]"></svg></button>
        <span class="more">»</span>
      </div>

      <div class="work">
        <aside class="side">
          <div class="grip"></div>
          <div class="sidegrid">
            <button v-for="b in sideTools" :key="b.icon" :aria-label="b.label" :class="{ fly: b.more }"><svg viewBox="0 0 70 70" v-html="icons[b.icon]"></svg></button>
          </div>
        </aside>

        <main class="views">
          <div class="viewport">
            <svg class="scene" viewBox="0 0 1204 1526" preserveAspectRatio="xMinYMin meet">
              <g transform="translate(-15 379) scale(.7908 .3333)">
                <path d="M347 1212L642 1033L818 1275L523 1454z" fill="#969ca4" />
                <path :d="floorLines" class="ln" stroke="#868b93" stroke-width="1" />
                <path :d="outline" fill="#94646a" />
                <path :d="gridD" class="ln" stroke="#000" stroke-width="1" />
                <path :d="outline" class="ln" stroke="#000" stroke-width="2" />
                <path v-for="s in streets" :key="s" :d="s" class="ln" stroke="#a00000" stroke-width="1" />
              </g>
              <g v-for="(m, i) in marks" :key="i" :transform="`translate(${m[0] * 0.7908 - 15} ${m[1] * 0.3333 + 379})`"><path d="M-8 -8L8 8M8 -8L-8 8" stroke="#960000" stroke-width="7" /></g>
              <path d="M91 1365v70l59-28M91 1435l-43-38" class="ln" stroke="#55585c" stroke-width="1" />
              <g font-size="34" fill="#5a5d61" font-family="Roboto, sans-serif"><text x="97" y="1366">z</text><text x="54" y="1414">y</text><text x="156" y="1424">x</text></g>
            </svg>
            <div class="viewname"><b>Perspective</b><svg viewBox="0 0 18 10"><path d="M0 1h18l-9 8z" fill="#222" /></svg></div>
          </div>
          <div class="viewtabs">
            <button>Top</button>
            <button class="on">Perspective<svg viewBox="0 0 215 52" preserveAspectRatio="none"><path d="M1 0l47 50h160q6 0 6-6V0" /></svg></button>
            <button>Front</button><button>Right</button>
            <svg class="plus" viewBox="0 0 22 22"><path d="M8 1h6v7h7v6h-7v7H8v-7H1V8h7z" /></svg>
          </div>
        </main>

        <aside class="panel">
          <div class="ptitle"><span>Layers</span><i></i></div>
          <div class="ptabs">
            <button v-for="(n, i) in panelTabs" :key="n" :aria-label="n" :class="{ on: i === 1 }"><svg viewBox="0 0 70 70" v-html="icons[n]"></svg></button>
            <svg class="cog" viewBox="8 8 54 54" v-html="icons.gearPale"></svg>
          </div>
          <div class="pbody">
            <div class="ltools"><button v-for="n in layerTools" :key="n" :aria-label="n"><svg viewBox="0 0 70 70" v-html="icons[n]"></svg></button></div>
            <div class="tablewrap">
              <table>
                <colgroup><col /><col class="c1" /><col class="c2" /><col class="c3" /><col class="c4" /><col class="c5" /></colgroup>
                <thead><tr><th>Layer</th><th>Current</th><th>On</th><th>Lock</th><th>Color</th><th>Mater</th></tr></thead>
                <tbody>
                  <tr v-for="l in layers" :key="l.name" :class="{ sel: l.selected }">
                    <td :class="{ child: l.depth > 0, bold: l.current }"><svg v-if="l.current" class="chev" viewBox="0 0 24 16"><path d="M2 3l10 10L22 3" /></svg>{{ l.name }}</td>
                    <td><svg v-if="l.current" class="tick" viewBox="0 0 34 26"><path d="M2 14l9 9L32 2" /></svg></td>
                    <td><svg v-if="!l.current" class="ic" viewBox="0 0 70 70" v-html="icons.bulb"></svg></td>
                    <td><svg v-if="!l.current" class="ic" viewBox="0 0 70 70" v-html="icons.unlock"></svg></td>
                    <td><span class="sw" :style="{ background: l.color }"></span></td>
                    <td><span class="mat"></span></td>
                  </tr>
                </tbody>
              </table>
            </div>
            <div class="hscroll">
              <svg viewBox="0 0 16 20"><path d="M13 2L5 10l8 8" /></svg><div class="track"><div class="thumb"></div></div><svg viewBox="0 0 16 20"><path d="M3 2l8 8-8 8" /></svg>
            </div>
          </div>
        </aside>
      </div>

      <div class="osnap">
        <label v-for="s in snaps" :key="s.n" :class="{ off: s.off }"><input type="checkbox" :checked="s.on" :disabled="s.off" />{{ s.n }}</label>
      </div>
      <footer class="status">
        <span class="s1">CPlane</span><span class="s2">x 11925.96</span><span class="s2">y 10071.06</span><span class="s2">z</span><span class="s2">Feet</span>
        <span class="slayer"><i></i>STREETS</span>
        <span class="g1">Grid Snap</span><span class="g2">Ortho</span><span class="g3">Planar</span><span class="g4 hot">Osnap</span><span class="g5 hot">SmartTrack</span><span class="g6 hot">Gumball</span><span class="g7">Record History</span><span class="g8">Filter</span>
      </footer>
    </section>

    <section class="gh">
      <header class="title pale">
        <span>Grasshopper - W02_GenerativeUrbanism</span>
        <div class="winbtns">
          <button aria-label="Minimize"><svg viewBox="0 0 20 20"><path d="M0 9h20" stroke-width="2" /></svg></button>
          <button aria-label="Maximize"><svg viewBox="0 0 20 20"><path d="M1 1h18v18H1z" stroke-width="2" /></svg></button>
          <button aria-label="Close"><svg viewBox="0 0 20 20"><path d="M1 1l18 18M19 1L1 19" stroke-width="2" /></svg></button>
        </div>
      </header>
      <nav class="ghmenu"><button v-for="m in ghMenu" :key="m" :class="{ on: m === 'Display' }">{{ m }}</button><span class="doc">W02_GenerativeUrbanism</span></nav>
      <div class="ghtabs"><button v-for="(m, i) in ghTabs" :key="m" :class="{ on: i === 0 }">{{ m }}</button></div>
      <div class="ribbon">
        <section v-for="p in ribbon" :key="p.name">
          <div class="cells">
            <div v-for="(g, gi) in p.groups" :key="gi" class="grp">
              <div v-for="(c, ci) in g" :key="ci" class="col"><button v-for="n in c" :key="n" :aria-label="n"><svg viewBox="0 0 60 60" v-html="gh[n]"></svg></button></div>
            </div>
          </div>
          <div class="cap">{{ p.name }}<svg viewBox="0 0 18 20"><path d="M7 1h4v8h6l-8 10L1 9h6z" fill="#999" /></svg></div>
        </section>
      </div>
      <div class="ghbar">
        <button aria-label="Open" class="ib"><svg viewBox="0 0 60 60" v-html="gh.open"></svg></button>
        <button aria-label="Save" class="ib"><svg viewBox="0 0 60 60" v-html="gh.save"></svg></button>
        <div class="zoomsel"><select aria-label="Zoom"><option>50%</option></select><svg viewBox="0 0 18 10"><path d="M1 1l8 8 8-8" /></svg></div>
        <button aria-label="Zoom extents" class="ib"><svg viewBox="0 0 60 60" v-html="gh.frame"></svg></button><i class="dd"></i>
        <button aria-label="Preview" class="ib"><svg viewBox="0 0 60 60" v-html="gh.eye"></svg></button><i class="dd"></i>
        <button aria-label="Sketch" class="ib"><svg viewBox="0 0 60 60" v-html="gh.pencil"></svg></button>
        <div class="right">
          <button v-for="n in ['shadeA', 'shadeB', 'shadeC']" :key="n" :aria-label="n" :class="{ on: n === 'shadeC' }"><svg viewBox="0 0 60 60" v-html="gh[n]"></svg></button>
          <b></b>
          <button v-for="n in ['teal', 'green', 'halfBall']" :key="n" :aria-label="n"><svg viewBox="0 0 60 60" v-html="gh[n]"></svg></button>
          <b class="tight"></b>
          <button aria-label="Quality"><svg viewBox="0 0 60 60" v-html="gh.gem"></svg></button><i class="dd"></i>
        </div>
      </div>

      <div class="canvas">
        <svg viewBox="0 0 1768 1536" preserveAspectRatio="xMinYMin meet">
          <rect width="1768" height="488" fill="#cfcac2" />
          <path d="M0 488h1768" stroke="#222" stroke-width="2" />
          <g transform="translate(-13 484) scale(.574 .4592)">
            <rect x="375" y="70" width="1075" height="391" class="grpbox" /><rect x="404" y="492" width="939" height="615" class="grpbox" />
            <rect x="617" y="237" width="245" height="166" fill="#24231f" /><rect x="1345" y="237" width="96" height="44" fill="#22b422" /><rect x="1265" y="708" width="70" height="41" fill="#22b422" />
            <path v-for="d in mainWires" :key="d" :d="d" class="wire" />
            <path v-for="d in mainDash" :key="d" :d="d" class="wire dash" />
            <g v-for="(n, i) in mainNodes" :key="'n' + i"><rect :x="n[0]" :y="n[1]" :width="n[2]" :height="n[3]" rx="4" class="node" /><rect v-if="n[4]" :x="n[4]" :y="n[1] + 1" width="22" :height="n[3] - 2" rx="4" class="bar" /></g>
            <g v-for="(n, i) in mainLight" :key="'l' + i"><rect :x="n[0]" :y="n[1]" :width="n[2]" :height="n[3]" rx="4" class="node light" /><rect v-if="n[4]" :x="n[4]" :y="n[1] + 1" width="22" :height="n[3] - 2" rx="4" class="bar" /></g>
            <rect v-for="(n, i) in mainWhite" :key="'w' + i" :x="n[0]" :y="n[1]" :width="n[2]" :height="n[3]" rx="4" class="node paperNode" />
            <path d="M168 838v96M170 952v328" class="faint grey" />
            <rect x="290" y="840" width="6" height="14" rx="3" fill="#888" /><rect x="290" y="1104" width="6" height="175" rx="3" fill="#888" />
            <rect x="783" y="964" width="139" height="520" rx="4" class="node yellow" /><path d="M795 965v518" class="faint" /><rect x="915" y="966" width="7" height="417" rx="3" fill="#9c9838" />
            <rect x="1098" y="219" width="108" height="43" rx="4" class="node" /><rect x="1102" y="223" width="99" height="34" class="inner" />
            <rect x="1108" y="421" width="7" height="26" rx="3" fill="#666" /><rect x="935" y="781" width="7" height="14" rx="3" fill="#666" />
            <path d="M36 698h150" stroke="#ccc" class="ln" /><ellipse cx="130" cy="753" rx="8" ry="8" fill="#ddd" stroke="#888" /><ellipse cx="151" cy="753" rx="8" ry="8" fill="#ddd" stroke="#888" /><path d="M104 762c-2-12 6-18 13-18 0 10-5 16-13 18z" fill="#3a8a3a" /><path d="M85 748l7 10M92 748l-7 10" stroke="#555" stroke-width="2" />
          </g>
          <g transform="translate(787 524) scale(.4783 .3333)">
            <rect x="206" y="295" width="1247" height="380" class="grpbox" /><rect x="215" y="328" width="118" height="144" fill="#bd1f1f" /><rect x="1353" y="370" width="90" height="108" fill="#22b422" />
            <path v-for="d in sideWires" :key="d" :d="d" class="wire" />
            <path v-for="d in sideDash" :key="d" :d="d" class="wire dash" />
            <g v-for="(n, i) in sideNodes" :key="i"><rect :x="n[0]" :y="n[1]" :width="n[2]" :height="n[3]" rx="4" class="node" /><rect v-if="n[4]" :x="n[4]" :y="n[1] + 2" width="26" :height="n[3] - 4" rx="4" class="bar" /></g>
            <rect x="1007" y="416" width="130" height="60" rx="4" class="node" /><rect x="1013" y="424" width="119" height="43" class="inner" />
            <rect x="559" y="630" width="52" height="31" rx="4" class="node paperNode" />
            <rect x="1368" y="383" width="64" height="32" rx="4" class="node light" /><rect x="1362" y="433" width="67" height="31" rx="4" class="node light" />
          </g>
          <g font-family="Open Sans, sans-serif" font-size="6" fill="#222">
            <template v-for="(r, i) in branchRows" :key="r"><text x="555" :y="647 + i * 8">{{ r }}</text><text x="602" :y="647 + i * 8">N = 26</text></template>
            <text x="454" y="849">Data with 70 branches</text>
            <template v-for="(r, i) in dataRows" :key="r"><text x="454" :y="858 + i * 8">{{ r }}</text><text x="505" :y="858 + i * 8">N = 1</text></template>
          </g>
          <g transform="translate(1 1464)"><rect width="15" height="70" fill="#808080" stroke="#000" stroke-width="2" /><rect x="1" y="1" width="13" height="24" fill="#c4c4c4" /></g>
          <g transform="translate(1690 1457)">
            <circle r="50" fill="#f0eeea" stroke="#555" stroke-width="3" /><circle r="38" fill="url(#lightFill)" stroke="#999" stroke-width="2" />
            <path d="M-34 -40l14-6-4 12zM40 -34l4 12-10-4zM-44 26l-2-12 10 6zM28 44l-12 2 6-10z" fill="#222" />
            <path d="M-60 -24C-50 -44 -34 -52 -14 -54L-14 -46C-32 -44 -44 -36 -52 -20zM-68 -34l14 0-6 14z" fill="#111" />
          </g>
        </svg>
      </div>
      <footer class="ghstatus">
        <svg viewBox="0 0 40 40"><circle cx="20" cy="20" r="18" fill="#1fa0d0" stroke="#0c1c90" stroke-width="4" /><path d="M20 8v14M20 29v3" stroke="#0c1c70" stroke-width="8" stroke-linecap="round" /><path d="M20 8v14M20 30v1" stroke="#e8f4ff" stroke-width="4" stroke-linecap="round" /></svg>
        <span>Solution completed in ~4.1 seconds (60 seconds ago)</span><em>1.0.0007</em>
      </footer>
    </section>
    <div class="taskbar"><i></i><b></b><s></s></div>
  </div>
</template>

<style>
body { background: #2b2b2b; overflow: hidden; }
</style>

<style scoped>
* { box-sizing: border-box; }
.desktop { position: relative; display: flex; gap: 10px; width: 100%; height: 100vh; padding: 2px 2px 9px 16px; background: #262728; font: 28px/36px "Open Sans", "Noto Sans", sans-serif; color: #2b2d30; white-space: nowrap; }
.defs { position: absolute; width: 0; height: 0; }
.edge { position: absolute; left: 0; top: 0; bottom: 9px; width: 16px; background: linear-gradient(#2f3233 0 187px, #6fae00 187px 307px, #262626 307px 50%, #050505 60%); }
button { font: inherit; color: inherit; background: none; border: 0; padding: 0; margin: 0; }
svg { display: block; flex: none; }
.rhino { flex: 2037 1 0; min-width: 0; display: flex; flex-direction: column; background: #ebecf0; overflow: hidden; }
.gh { flex: 1768 1 0; min-width: 0; display: flex; flex-direction: column; background: #f0f0f0; overflow: hidden; margin-bottom: 2px; }
.title { display: flex; align-items: center; height: 70px; flex: none; background: #fff; color: #000; padding-left: 16px; gap: 6px; font-size: 29px; }
.logo { width: 40px; height: 40px; }
.pale { color: #999; font-size: 28px; }
.winbtns { display: flex; margin-left: auto; height: 100%; stroke: #999; }
.winbtns.dark { stroke: #000; }
.winbtns button { width: 116px; display: flex; align-items: center; justify-content: center; }
.winbtns svg { width: 20px; height: 20px; fill: none; stroke: inherit; }
.menu { display: flex; align-items: center; height: 47px; flex: none; background: #fff; color: #000; padding: 2px 0 0 1px; }
.menu button { padding: 0 7px; }
.command { flex: none; margin: 5px 1px 0 8px; padding: 0 0 3px 7px; border-left: 3px double #c6cce0; border-bottom: 2px solid #ced4e6; }
.history { display: flex; height: 80px; background: #fff; color: #000; }
.lines { flex: 1; min-width: 0; overflow: hidden; padding: 2px 0 0 2px; }
.lines p { margin: 0; line-height: 40px; height: 40px; }
.vscroll { width: 41px; background: #f0f0f0; display: flex; flex-direction: column; align-items: center; justify-content: space-around; }
.vscroll svg, .hscroll svg { width: 20px; fill: none; stroke: #555; stroke-width: 4; }
.prompt { display: flex; align-items: center; height: 44px; border-top: 2px solid #bcc5dc; background: #fff; color: #000; font-weight: 700; padding-left: 2px; }
.caret { width: 1px; height: 40px; background: #000; margin-left: 3px; }
.prompt input { flex: 1; border: 0; outline: 0; font: inherit; background: none; }
.spin { width: 40px; display: flex; flex-direction: column; }
.spin button { height: 21px; border: 1px solid #999; background: #eee; font-size: 12px; line-height: 12px; }
.tooltabs { display: flex; align-items: flex-end; height: 54px; flex: none; margin-left: 16px; border-bottom: 2px solid #bcc5dc; padding-top: 3px; }
.tooltabs button { padding: 0 33px; height: 50px; margin-bottom: -2px; }
.tooltabs .on { border: 2px solid #c3c9de; border-bottom-color: #ebecf0; border-radius: 8px 8px 0 0; padding: 0 31px; }
.more { color: #444; font-size: 32px; }
.tooltabs .more { margin-left: auto; height: 50px; line-height: 44px; padding-left: 3px; border-left: 1px solid #c3c9de; border-top: 1px solid #c3c9de; width: 30px; }
.cog { width: 36px; height: 46px; }
.toolbar { display: flex; align-items: center; height: 92px; flex: none; padding: 0 0 22px 4px; margin-left: 8px; border-left: 3px double #c6cce0; }
.toolbar button, .sidegrid button { position: relative; width: 70px; height: 70px; flex: none; }
.toolbar .more { margin-left: 6px; }
.fly::after { content: ""; position: absolute; right: 3px; bottom: 3px; width: 15px; height: 15px; background: #77787c; clip-path: polygon(100% 0, 100% 100%, 0 100%); }
.work { flex: 1; min-height: 0; display: flex; }
.side { width: 148px; flex: none; padding-left: 1px; overflow: hidden; }
.grip { height: 4px; margin: 5px 8px 7px 3px; border: 1px solid #cad2e8; border-width: 1px 0; }
.sidegrid { display: grid; grid-template-columns: 70px 70px; }
.views { flex: 1; min-width: 0; display: flex; flex-direction: column; }
.viewport { position: relative; flex: 1; min-height: 0; background: #9ca2aa; border: 1px solid #bcc5dc; overflow: hidden; }
.scene { width: 100%; height: 100%; }
.ln { fill: none; vector-effect: non-scaling-stroke; }
.viewname { position: absolute; left: 0; top: 0; display: flex; align-items: center; height: 45px; background: #859eef; border-radius: 0 0 8px 0; padding: 0 5px 0 15px; }
.viewname b { padding-right: 12px; border-right: 1px solid #222; height: 42px; line-height: 42px; }
.viewname svg { width: 18px; margin-left: 5px; }
.viewtabs { display: flex; align-items: center; height: 52px; margin-bottom: 1px; padding: 2px 0 0 27px; }
.viewtabs button { position: relative; margin-right: 41px; }
.viewtabs .on svg { position: absolute; left: -53px; top: -9px; width: 215px; height: 52px; fill: none; stroke: #c3c9de; stroke-width: 2; }
.plus { width: 22px; fill: #fff; stroke: #888; stroke-width: 1; }
.panel { width: 684px; flex: none; padding: 0 2px 5px 11px; display: flex; flex-direction: column; }
.ptitle { display: flex; align-items: center; height: 49px; padding-left: 6px; gap: 9px; }
.ptitle i { flex: 1; height: 4px; border: 1px solid #c6cfe4; border-width: 1px 0; margin-bottom: 4px; }
.ptabs { display: flex; align-items: center; height: 53px; padding-right: 1px; }
.ptabs button { width: 69px; height: 100%; display: flex; align-items: center; justify-content: center; padding-top: 6px; }
.ptabs button:first-child { width: 61px; padding-right: 8px; }
.ptabs .on { border: 2px solid #bcc5dc; border-bottom-color: #ebecf0; margin-bottom: -4px; }
.ptabs button svg { width: 50px; height: 50px; }
.ptabs .cog { margin-left: auto; height: 36px; }
.pbody { flex: 1; min-height: 0; display: flex; flex-direction: column; border: 2px solid #bcc5dc; border-width: 2px 1px; padding-right: 8px; }
.ltools { display: flex; align-items: center; height: 90px; padding: 4px 0 0 13px; border-bottom: 1px solid #bcc5dc; margin-right: -8px; flex: none; }
.ltools svg { width: 55px; height: 54px; }
.tablewrap { flex: 1; min-height: 0; background: #fff; overflow: hidden; }
table { width: 100%; border-collapse: collapse; table-layout: fixed; }
.c1 { width: 116px; } .c2 { width: 63px; } .c3 { width: 74px; } .c4 { width: 86px; } .c5 { width: 84px; }
th { height: 51px; padding: 0; font-weight: 400; border-right: 1px solid #dde; }
th:first-child { text-align: left; padding-left: 6px; }
th:last-child { border: 0; text-align: left; padding-left: 5px; }
td { height: 45px; padding: 0; border-bottom: 1px solid #eee; text-align: center; position: relative; }
td:first-child { text-align: left; padding-left: 52px; }
td.child:first-child { padding-left: 93px; }
.bold { font-weight: 700; }
.chev { position: absolute; left: 12px; top: 12px; width: 24px; fill: none; stroke: #333; stroke-width: 5; }
.tick { width: 34px; margin: 0 auto; fill: none; stroke: #000; stroke-width: 4; }
.ic { width: 42px; height: 42px; margin: 0 auto; }
.sw { display: block; width: 34px; height: 34px; margin: 0 auto; border: 2px solid #2b2d30; }
.mat { display: block; width: 32px; height: 32px; border-radius: 50%; background: #fafafa; margin-left: 7px; }
.sel { background: #859eef; }
.sel .sw { border-color: #fff; }
.sel .mat { background: #fff; width: 36px; height: 36px; margin-left: 5px; }
.sel .ic { filter: drop-shadow(0 0 1px #fff) drop-shadow(0 0 1px #fff); }
.hscroll { display: flex; align-items: center; height: 41px; background: #f0f0f0; flex: none; padding: 0 11px; gap: 12px; }
.hscroll svg { width: 20px; height: 22px; }
.track { flex: 1; height: 100%; }
.thumb { width: 78%; height: 100%; background: #cdcdcd; }
.osnap { display: flex; align-items: center; height: 48px; flex: none; margin: 10px 0 1px 9px; padding-left: 12px; border-left: 3px double #d4d8e6; }
.osnap label { display: flex; align-items: center; gap: 9px; margin-right: 18px; }
.osnap label:nth-child(odd) { margin-right: 17px; }
.osnap label.off { margin-right: 40px; }
.osnap input { appearance: none; position: relative; width: 32px; height: 32px; margin: 0; border: 2px solid #333; background: #fff; }
.osnap .off input { border: 1px solid #aaa; background: #e0e0e0; }
.osnap input:checked::after { content: ""; position: absolute; inset: 4px; background: #222; clip-path: polygon(0 55%, 10% 48%, 35% 78%, 92% 6%, 100% 14%, 36% 96%); }
.status { display: flex; height: 22px; flex: none; border-top: 2px solid #bcc5dc; overflow: hidden; line-height: 40px; }
.status span { flex: none; height: 40px; border-right: 1px solid #bcc5dc; text-align: center; overflow: hidden; }
.status .s1 { width: 94px; } .status .s2 { width: 172px; }
.status .slayer { width: 337px; flex: 1 1 auto; display: flex; gap: 5px; padding-left: 8px; }
.slayer i { width: 24px; height: 24px; background: #000; margin-top: 6px; }
.status .g1 { width: 127px; } .status .g2 { width: 84px; } .status .g3 { width: 87px; } .status .g4 { width: 91px; }
.status .g5 { width: 141px; text-align: left; } .status .g6 { width: 111px; text-align: left; } .status .g7 { width: 181px; text-align: left; } .status .g8 { width: 56px; margin-right: 40px; text-align: left; }
.status .hot { background: #cfd7ec; font-weight: 700; }

.gh .title { padding-left: 17px; }
.ghmenu { display: flex; align-items: center; height: 65px; flex: none; padding: 5px 18px 5px 8px; background: linear-gradient(90deg, #f0f0f0, #fcfcfc); color: #000; }
.ghmenu button { padding: 0 14px; height: 45px; border: 1px solid transparent; margin-right: 2px; }
.ghmenu .on { background: #b3d7f3; border-color: #0078d7; }
.doc { margin-left: auto; }
.ghtabs { display: flex; align-items: flex-end; height: 56px; flex: none; font: 27px/32px "Liberation Sans", Arial, sans-serif; color: #666; }
.ghtabs button { height: 56px; padding: 2px 21px 0; }
.ghtabs .on { background: linear-gradient(#fff 80%, #eee); border: 1px solid #999; border-bottom: 0; border-radius: 14px 14px 0 0; color: #000; width: 136px; padding: 0; }
.ribbon { display: flex; gap: 11px; align-items: flex-start; flex: none; height: 215px; padding: 3px 9px; border: 1px solid #999; border-width: 1px 1px 0 0; border-radius: 0 14px 0 0; background: linear-gradient(#d6d6d6, #f0f0f0 85%); }
.ribbon > section { border: 1px solid #999; border-radius: 9px; overflow: hidden; background: linear-gradient(#dadada, #eee); }
.cells { display: flex; height: 145px; padding: 3px 4px 0 3px; }
.grp { display: flex; }
.grp + .grp { margin-left: 12px; padding-left: 12px; border-left: 1px solid #c8c8c8; }
.col { width: 70px; }
.col button { display: block; width: 70px; height: 70px; padding: 5px; }
.col svg { width: 60px; height: 60px; }
.cap { position: relative; height: 34px; background: linear-gradient(#303030, #181818); color: #fff; font: 25px/30px "Liberation Sans", Arial, sans-serif; text-align: center; padding-right: 28px; }
.cap svg { position: absolute; right: 6px; top: 8px; width: 18px; height: 20px; }
.ghbar { display: flex; align-items: center; flex: none; height: 68px; border-top: 2px solid #777; background: linear-gradient(#fff, #f2f2f2); padding: 0 8px 0 6px; }
.ib svg { width: 57px; height: 57px; }
.ib + .ib { margin-left: 8px; }
.zoomsel { position: relative; margin: 0 6px 0 14px; }
.zoomsel select { appearance: none; width: 356px; height: 49px; border: 1px solid #777; border-radius: 0; background: #fff; font: inherit; color: #000; padding: 0 4px; }
.zoomsel svg { position: absolute; right: 11px; top: 19px; width: 18px; fill: none; stroke: #444; stroke-width: 1; }
.dd { width: 12px; height: 7px; background: #000; clip-path: polygon(0 0, 100% 0, 50% 100%); margin: 0 13px; }
.right { display: flex; align-items: center; margin-left: auto; }
.right button { width: 64px; height: 64px; display: flex; align-items: center; justify-content: center; }
.right button svg { width: 54px; height: 57px; }
.right .on { border: 1px solid #0078d7; background: #fff; }
.right b { width: 1px; height: 56px; background: #bbb; margin: 0 8px; }
.right .tight { margin: 0 2px; }
.right .dd { margin: 0 4px 0 2px; }
.canvas { flex: 1; min-height: 0; background: #d4cfc8; border-left: 1px solid #777; overflow: hidden; }
.canvas > svg { width: 100%; height: 100%; }
.grpbox { fill: #575650; stroke: #77766f; stroke-width: 1; vector-effect: non-scaling-stroke; }
.wire { fill: none; stroke: #1c1c18; stroke-opacity: .75; stroke-width: 1; vector-effect: non-scaling-stroke; }
.faint { fill: none; stroke: #d8d24a; vector-effect: non-scaling-stroke; }
.grey { stroke: #ccc; }
.dash { stroke-width: 2; stroke-dasharray: 6 3; stroke-opacity: .65; }
.node { fill: url(#nodeFill); stroke: #2a2a30; stroke-width: 1.5; vector-effect: non-scaling-stroke; }
.light { fill: url(#lightFill); }
.paperNode { fill: #fff; }
.yellow { fill: #fff957; }
.bar { fill: url(#barFill); stroke: #000; stroke-width: 1; vector-effect: non-scaling-stroke; }
.inner { fill: #abaab6; stroke: #111; stroke-width: 1; vector-effect: non-scaling-stroke; }
.ghstatus { display: flex; align-items: center; height: 46px; flex: none; background: #f0f0f0; border-top: 2px solid #ddd; color: #000; padding: 0 86px 0 6px; gap: 6px; font-size: 29px; }
.ghstatus svg { width: 40px; height: 40px; }
.ghstatus em { font-style: normal; color: #777; margin-left: auto; font-size: 28px; }
.taskbar { position: absolute; left: 0; right: 0; bottom: 0; height: 9px; display: flex; background: linear-gradient(90deg, #2b2b2b, #1e1e20); }
.taskbar i { margin-left: 120px; width: 862px; border: 3px solid #5a5a5a; border-bottom: 0; background: #333; }
.taskbar b { width: 128px; background: #4a4a4a; }
.taskbar s { margin-left: 1240px; width: 122px; background: #a8703f; }
</style>
